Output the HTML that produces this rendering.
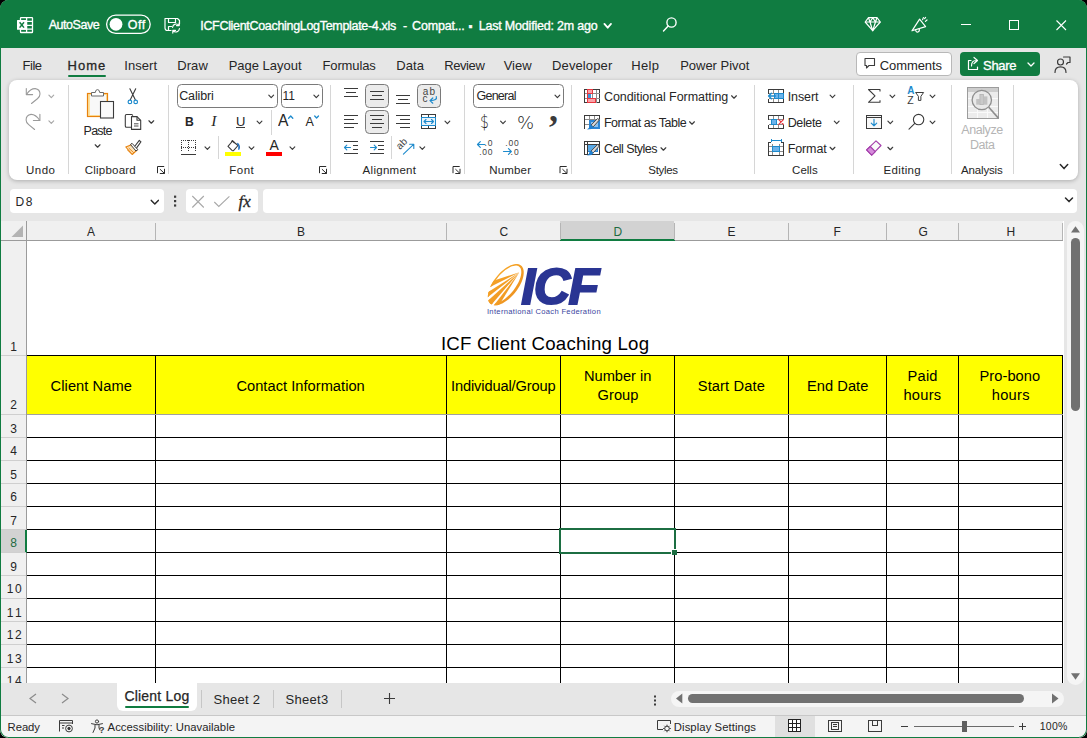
<!DOCTYPE html>
<html lang="en"><head><meta charset="utf-8"><title>ICFClientCoachingLogTemplate-4.xls - Excel</title>
<style>
html,body{margin:0;padding:0;background:#000;}
body{width:1087px;height:738px;overflow:hidden;position:relative;font-family:'Liberation Sans',sans-serif;}
#win{position:absolute;left:0;top:0;width:1087px;height:738px;background:#e6e6e6;border-radius:8.5px;overflow:hidden;}
.a{position:absolute;}
.t{position:absolute;white-space:pre;line-height:normal;font-family:'Liberation Sans',sans-serif;}
svg{position:absolute;left:0;top:0;}
</style></head><body>
<div id="win">
<div class="a" style="left:0px;top:0px;width:1087px;height:48px;background:#107c41;"></div>
<div class="a" style="left:9px;top:80px;width:1069px;height:100px;background:#fff;border-radius:8px;box-shadow:0 1px 4px rgba(0,0,0,.25);"></div>
<div class="a" style="left:856px;top:52px;width:96px;height:24px;background:#fff;border-radius:4px;box-sizing:border-box;border:1px solid #b8b8b8;"></div>
<div class="a" style="left:960px;top:52px;width:80px;height:24px;background:#107c41;border-radius:4px;"></div>
<div class="a" style="left:68px;top:75px;width:38px;height:2px;background:#107c41;border-radius:1px;"></div>
<div class="a" style="left:10px;top:189px;width:154px;height:24px;background:#fff;border-radius:4px;"></div>
<div class="a" style="left:186px;top:189px;width:72px;height:24px;background:#fff;border-radius:4px;"></div>
<div class="a" style="left:263px;top:189px;width:814px;height:24px;background:#fff;border-radius:4px;"></div>
<div class="a" style="left:1px;top:221px;width:1062px;height:462px;background:#fff;"></div>
<div class="a" style="left:1px;top:221px;width:1062px;height:19px;background:#f0f0f0;"></div>
<div class="a" style="left:1px;top:221px;width:25px;height:462px;background:#f0f0f0;"></div>
<div class="a" style="left:560px;top:221px;width:114px;height:19px;background:#d2d2d2;"></div>
<div class="a" style="left:1px;top:530px;width:25px;height:22px;background:#d2d2d2;"></div>
<div class="a" style="left:1px;top:240px;width:1062px;height:1px;background:#9b9b9b;"></div>
<div class="a" style="left:26px;top:221px;width:1px;height:462px;background:#9b9b9b;"></div>
<div class="a" style="left:560px;top:239px;width:115px;height:2px;background:#107c41;"></div>
<div class="a" style="left:25px;top:530px;width:2px;height:23px;background:#107c41;"></div>
<div class="a" style="left:155px;top:223px;width:1px;height:17px;background:#b5b5b5;"></div>
<div class="a" style="left:446px;top:223px;width:1px;height:17px;background:#b5b5b5;"></div>
<div class="a" style="left:560px;top:223px;width:1px;height:17px;background:#b5b5b5;"></div>
<div class="a" style="left:674px;top:223px;width:1px;height:17px;background:#b5b5b5;"></div>
<div class="a" style="left:788px;top:223px;width:1px;height:17px;background:#b5b5b5;"></div>
<div class="a" style="left:886px;top:223px;width:1px;height:17px;background:#b5b5b5;"></div>
<div class="a" style="left:958px;top:223px;width:1px;height:17px;background:#b5b5b5;"></div>
<div class="a" style="left:1062px;top:223px;width:1px;height:17px;background:#b5b5b5;"></div>
<div class="a" style="left:1px;top:355px;width:25px;height:1px;background:#cfcfcf;"></div>
<div class="a" style="left:1px;top:414px;width:25px;height:1px;background:#cfcfcf;"></div>
<div class="a" style="left:1px;top:437px;width:25px;height:1px;background:#cfcfcf;"></div>
<div class="a" style="left:1px;top:460px;width:25px;height:1px;background:#cfcfcf;"></div>
<div class="a" style="left:1px;top:483px;width:25px;height:1px;background:#cfcfcf;"></div>
<div class="a" style="left:1px;top:506px;width:25px;height:1px;background:#cfcfcf;"></div>
<div class="a" style="left:1px;top:529px;width:25px;height:1px;background:#cfcfcf;"></div>
<div class="a" style="left:1px;top:552px;width:25px;height:1px;background:#cfcfcf;"></div>
<div class="a" style="left:1px;top:575px;width:25px;height:1px;background:#cfcfcf;"></div>
<div class="a" style="left:1px;top:598px;width:25px;height:1px;background:#cfcfcf;"></div>
<div class="a" style="left:1px;top:621px;width:25px;height:1px;background:#cfcfcf;"></div>
<div class="a" style="left:1px;top:644px;width:25px;height:1px;background:#cfcfcf;"></div>
<div class="a" style="left:1px;top:667px;width:25px;height:1px;background:#cfcfcf;"></div>
<div class="a" style="left:27px;top:356px;width:1035px;height:58px;background:#ffff00;"></div>
<div class="a" style="left:155px;top:355px;width:1px;height:328px;background:#000;"></div>
<div class="a" style="left:446px;top:355px;width:1px;height:328px;background:#000;"></div>
<div class="a" style="left:560px;top:355px;width:1px;height:328px;background:#000;"></div>
<div class="a" style="left:674px;top:355px;width:1px;height:328px;background:#000;"></div>
<div class="a" style="left:788px;top:355px;width:1px;height:328px;background:#000;"></div>
<div class="a" style="left:886px;top:355px;width:1px;height:328px;background:#000;"></div>
<div class="a" style="left:958px;top:355px;width:1px;height:328px;background:#000;"></div>
<div class="a" style="left:1062px;top:355px;width:1px;height:328px;background:#000;"></div>
<div class="a" style="left:27px;top:355px;width:1036px;height:1px;background:#000;"></div>
<div class="a" style="left:27px;top:414px;width:1036px;height:1px;background:#a0a0a0;"></div>
<div class="a" style="left:27px;top:437px;width:1036px;height:1px;background:#000;"></div>
<div class="a" style="left:27px;top:460px;width:1036px;height:1px;background:#000;"></div>
<div class="a" style="left:27px;top:483px;width:1036px;height:1px;background:#000;"></div>
<div class="a" style="left:27px;top:506px;width:1036px;height:1px;background:#000;"></div>
<div class="a" style="left:27px;top:529px;width:1036px;height:1px;background:#000;"></div>
<div class="a" style="left:27px;top:552px;width:1036px;height:1px;background:#000;"></div>
<div class="a" style="left:27px;top:575px;width:1036px;height:1px;background:#000;"></div>
<div class="a" style="left:27px;top:598px;width:1036px;height:1px;background:#000;"></div>
<div class="a" style="left:27px;top:621px;width:1036px;height:1px;background:#000;"></div>
<div class="a" style="left:27px;top:644px;width:1036px;height:1px;background:#000;"></div>
<div class="a" style="left:27px;top:667px;width:1036px;height:1px;background:#000;"></div>
<div class="a" style="left:559px;top:528px;width:117px;height:26px;background:transparent;box-sizing:border-box;border:2px solid #1c6e42;"></div>
<div class="a" style="left:671px;top:549px;width:6px;height:6px;background:#fff;"></div>
<div class="a" style="left:672px;top:550px;width:5px;height:5px;background:#1c6e42;"></div>
<div class="a" style="left:1063px;top:221px;width:1px;height:462px;background:#fff;"></div>
<div class="a" style="left:1px;top:683px;width:116px;height:32px;background:#e6e6e6;border-top-right-radius:5px;"></div>
<div class="a" style="left:197px;top:683px;width:889px;height:32px;background:#e6e6e6;border-top-left-radius:5px;"></div>
<div class="a" style="left:117px;top:711px;width:80px;height:4px;background:#e6e6e6;"></div>
<div class="a" style="left:117px;top:683px;width:80px;height:28px;background:#fff;border-radius:0 0 6px 6px;"></div>
<div class="a" style="left:125px;top:706px;width:64px;height:2px;background:#107c41;border-radius:1px;"></div>
<div class="a" style="left:201px;top:690px;width:1px;height:18px;background:#c6c6c6;"></div>
<div class="a" style="left:273px;top:690px;width:1px;height:18px;background:#c6c6c6;"></div>
<div class="a" style="left:341px;top:690px;width:1px;height:18px;background:#c6c6c6;"></div>
<div class="a" style="left:1067px;top:221px;width:17px;height:464px;background:#f5f5f5;border-radius:9px;"></div>
<div class="a" style="left:1071px;top:238px;width:9px;height:173px;background:#717171;border-radius:5px;"></div>
<div class="a" style="left:671px;top:691px;width:393px;height:16px;background:#f5f5f5;border-radius:8px;"></div>
<div class="a" style="left:688px;top:694px;width:336px;height:9px;background:#717171;border-radius:5px;"></div>
<div class="a" style="left:1px;top:716px;width:1085px;height:21px;background:#f4f4f4;"></div>
<div class="a" style="left:1px;top:715px;width:1085px;height:1px;background:#c8c8c8;"></div>
<div class="a" style="left:775px;top:716px;width:40px;height:21px;background:#e0e0e0;"></div>
<div class="a" style="left:914px;top:726px;width:100px;height:1px;background:#6a6a6a;"></div>
<div class="a" style="left:962px;top:721px;width:5px;height:11px;background:#5f5f5f;"></div>
<div class="a" style="left:0px;top:0px;width:1087px;height:738px;background:transparent;border-radius:8.5px;box-shadow:inset 0 0 0 1px #107c41;"></div>
<span class="t" style="left:396px;top:138px;font-size:10px;color:#444;transform:rotate(-45deg);transform-origin:50% 50%;">ab</span>
<svg width="1087" height="738" viewBox="0 0 1087 738" fill="none">
<g stroke="#fff" stroke-width="1.3"><rect x="20.5" y="17.6" width="12" height="14.9" rx="0.6"/><path d="M26.6 17.6V32.5 M20.5 21.4H32.5 M20.5 25.3H32.5 M20.5 29.2H32.5"/></g>
<rect x="17" y="20" width="9.7" height="9.8" rx="0.5" fill="#fff"/>
<path d="M19.6 22.2 L24 27.6 M24 22.2 L19.6 27.6" stroke="#107c41" stroke-width="1.5"/>
<rect x="106.6" y="15.1" width="43.6" height="18.3" rx="9.15" stroke="#fff" stroke-width="1.3"/>
<circle cx="116" cy="24.3" r="6.4" fill="#fff"/>
<g stroke="#fff" stroke-width="1.2" stroke-linejoin="round" stroke-linecap="round"><path d="M171 30.5 H167.5 Q165 30.5 165 28 V18.5 H177.5 L179.5 20.5 V24"/><path d="M168.5 18.5 V22.5 H175.5 V18.5"/><path d="M168.5 30.5 V26.5 H171.5"/><path d="M172.6 27.3 A3.6 3.6 0 0 1 179 25.4 M179.2 22.9 V25.6 H176.5"/><path d="M179.4 28.7 A3.6 3.6 0 0 1 173 30.6 M172.8 33.1 V30.4 H175.5"/></g>
<path d="M604.4000000000001 23.900000000000002 L607.7 27.7 L611.0 23.900000000000002" stroke="#fff" stroke-width="1.8" stroke-linecap="round" stroke-linejoin="round"/>
<g stroke="#fff" stroke-width="1.4" stroke-linecap="round"><circle cx="671.5" cy="22.5" r="4.6"/><path d="M668.2 26 L663.5 31"/></g>
<g stroke="#fff" stroke-width="1.2" stroke-linejoin="round"><path d="M868.5 17.7 H877 L880.3 22 L872.7 30.7 L865.2 22 Z"/><path d="M865.2 22 H880.3 M870 22 L872.7 30.7 L875.5 22 M868.5 17.7 L870 22 L872.7 17.7 L875.5 22 L877 17.7"/></g>
<g stroke="#fff" stroke-width="1.2" stroke-linejoin="round" stroke-linecap="round"><path d="M912 30.8 L919.6 19.2 L925.6 26.6 Z"/><path d="M915.6 29.8 Q915.8 32.4 918 32 Q919.8 31.4 919.2 28.8"/><path d="M922.6 19.6 L923.4 17.6 M925.4 21.4 L927 20 M924.6 18.6 L925.6 17.4"/></g>
<rect x="961" y="24" width="10" height="1" fill="#fff" shape-rendering="crispEdges"/>
<rect x="1009.5" y="20.5" width="9" height="9" stroke="#fff" stroke-width="1"/>
<path d="M1056.5 20.5 L1066 30 M1066 20.5 L1056.5 30" stroke="#fff" stroke-width="1.1"/>
<path d="M865 58.5 H874.5 V65.5 H869 L866.5 68 V65.5 H865 Z" stroke="#3b3b3b" stroke-width="1.1" stroke-linejoin="round"/>
<g stroke="#fff" stroke-width="1.2" stroke-linejoin="round" stroke-linecap="round"><path d="M971 60.5 H968.5 V69.5 H977.5 V67"/><path d="M971.5 66 Q971.5 60.5 976 60.5 M974 57.5 L977.5 60.5 L974 63.5"/></g>
<path d="M1028.0 63.0 L1031 66.0 L1034.0 63.0" stroke="#fff" stroke-width="1.3" stroke-linecap="round" stroke-linejoin="round"/>
<g stroke="#3b3b3b" stroke-width="1.2" stroke-linejoin="round" stroke-linecap="round"><circle cx="1060.5" cy="62" r="3"/><path d="M1055 72.5 Q1055 66.8 1060.5 66.8 Q1066 66.8 1066 72.5"/><path d="M1063.5 57 H1070 V62.5 H1068 L1066.5 64"/></g>
<rect x="68" y="85" width="1" height="89" fill="#d6d6d6" shape-rendering="crispEdges"/>
<rect x="168" y="85" width="1" height="89" fill="#d6d6d6" shape-rendering="crispEdges"/>
<rect x="330" y="85" width="1" height="89" fill="#d6d6d6" shape-rendering="crispEdges"/>
<rect x="464" y="85" width="1" height="89" fill="#d6d6d6" shape-rendering="crispEdges"/>
<rect x="571" y="85" width="1" height="89" fill="#d6d6d6" shape-rendering="crispEdges"/>
<rect x="754" y="85" width="1" height="89" fill="#d6d6d6" shape-rendering="crispEdges"/>
<rect x="853" y="85" width="1" height="89" fill="#d6d6d6" shape-rendering="crispEdges"/>
<rect x="951" y="85" width="1" height="89" fill="#d6d6d6" shape-rendering="crispEdges"/>
<rect x="1013" y="85" width="1" height="89" fill="#d6d6d6" shape-rendering="crispEdges"/>
<rect x="271" y="110" width="1" height="25" fill="#d6d6d6" shape-rendering="crispEdges"/>
<rect x="218" y="136" width="1" height="23" fill="#d6d6d6" shape-rendering="crispEdges"/>
<rect x="391" y="136" width="1" height="23" fill="#d6d6d6" shape-rendering="crispEdges"/>
<g stroke="#9a9a9a" stroke-width="1.1" stroke-linejoin="round" stroke-linecap="round"><path d="M26.3 88.5 V94.6 H32.6"/><path d="M26.6 94.3 Q30.5 88.5 35.2 88.6 Q40 89.3 40 94 Q40 96.6 37.4 98.7 L31.5 103.5"/></g>
<g stroke="#9a9a9a" stroke-width="1.1" stroke-linejoin="round" stroke-linecap="round"><path d="M39.9 114.3 V120.5 H33.4"/><path d="M39.6 120.2 Q35.7 114.3 31 114.4 Q26.1 115.1 26.1 119.9 Q26.1 122.5 28.7 124.6 L34.6 129.5"/></g>
<path d="M48.9 95.05 L51.3 97.55 L53.699999999999996 95.05" stroke="#a8a8a8" stroke-width="1.15" stroke-linecap="round" stroke-linejoin="round"/>
<path d="M48.9 120.85 L51.3 123.35 L53.699999999999996 120.85" stroke="#a8a8a8" stroke-width="1.15" stroke-linecap="round" stroke-linejoin="round"/>
<rect x="87.5" y="93.5" width="20" height="23" fill="#fde2a0" stroke="#e8820e" stroke-width="1.2"/>
<rect x="90" y="95" width="16" height="20" fill="#f8f8f8"/>
<path d="M91.5 96 V92.5 H95.3 Q95.5 89.6 97.5 89.6 Q99.5 89.6 99.7 92.5 H103.5 V96 Z" fill="#fff" stroke="#6a6a6a" stroke-width="1" stroke-linejoin="round"/>
<rect x="100.5" y="101.5" width="13" height="16.5" fill="#fafafa" stroke="#3b3b3b" stroke-width="1.1"/>
<path d="M95.19999999999999 144.75 L97.6 147.25 L100.0 144.75" stroke="#3b3b3b" stroke-width="1.15" stroke-linecap="round" stroke-linejoin="round"/>
<g stroke-linecap="round"><path d="M129.9 88.8 L135.3 99.8 M135.7 88.8 L130.3 99.8" stroke="#3b3b3b" stroke-width="1.1"/><circle cx="129.9" cy="101.9" r="1.8" stroke="#1e8bcd" stroke-width="1.2"/><circle cx="135.7" cy="101.9" r="1.8" stroke="#1e8bcd" stroke-width="1.2"/></g>
<g stroke="#3b3b3b" stroke-width="1.1" stroke-linejoin="round"><path d="M131 127.3 H126.5 Q125.3 127.3 125.3 126 V115.7 Q125.3 114.5 126.5 114.5 H131.5 Q132.7 114.5 132.7 115.7"/><path d="M131.5 116.6 H137 L140.7 120.3 V129.4 H131.5 Z" fill="#fff"/><path d="M137 116.6 V120.3 H140.7"/><path d="M134 123.8 H138.5 M134 126 H138.5" stroke-width="0.9"/></g>
<path d="M148.9 120.75 L151.3 123.25 L153.70000000000002 120.75" stroke="#3b3b3b" stroke-width="1.15" stroke-linecap="round" stroke-linejoin="round"/>
<g stroke-linejoin="round" stroke-linecap="round"><path d="M125.8 147 L132 144.6 L137 150.2 L132.2 154.5 Z" fill="#fbe0b5" stroke="#e8820e" stroke-width="1.1"/><path d="M129 148.3 L133.6 152.6 M127.4 150 L131.2 153.6" stroke="#e8820e" stroke-width="0.9"/><path d="M132.3 143.6 L137.8 149.6 L136 151 L130.7 144.8 Z" fill="#fff" stroke="#3b3b3b" stroke-width="1"/><path d="M135 146 L139.3 140.4 L141 141.8 L136.8 147.6" stroke="#3b3b3b" stroke-width="1.1" fill="#fff"/></g>
<path d="M157.5 172.8 V166.5 H163.8" stroke="#2b2b2b" stroke-width="1" stroke-linecap="round" stroke-linejoin="round"/>
<path d="M160.2 169.4 L164.3 173.3 M164.5 169.2 V173.5 H160.2" stroke="#2b2b2b" stroke-width="1" stroke-linecap="round" stroke-linejoin="round"/>
<rect x="177.5" y="84.5" width="100" height="23" rx="4" stroke="#7a7a7a" stroke-width="1" fill="#fff"/>
<rect x="281.5" y="84.5" width="41" height="23" rx="4" stroke="#7a7a7a" stroke-width="1" fill="#fff"/>
<path d="M268.8 95.05 L271.2 97.55 L273.59999999999997 95.05" stroke="#3b3b3b" stroke-width="1.15" stroke-linecap="round" stroke-linejoin="round"/>
<path d="M313.90000000000003 95.05 L316.3 97.55 L318.7 95.05" stroke="#3b3b3b" stroke-width="1.15" stroke-linecap="round" stroke-linejoin="round"/>
<rect x="236" y="127" width="9" height="1" fill="#3b3b3b" shape-rendering="crispEdges"/>
<path d="M257.1 121.05 L259.5 123.55 L261.9 121.05" stroke="#3b3b3b" stroke-width="1.15" stroke-linecap="round" stroke-linejoin="round"/>
<path d="M288.6 118.2 L290.7 116 L292.8 118.2" stroke="#1e8bcd" stroke-width="1.3" stroke-linecap="round" stroke-linejoin="round"/>
<path d="M314.7 116 L316.6 118 L318.5 116" stroke="#1e8bcd" stroke-width="1.3" stroke-linecap="round" stroke-linejoin="round"/>
<g stroke="#3b3b3b" stroke-width="1" stroke-dasharray="1 1" shape-rendering="crispEdges"><path d="M181 140.5 H196 M181.5 140 V152 M195.5 140 V152 M188.5 140 V152 M181 147.5 H196"/></g>
<rect x="181" y="154" width="15" height="1.3" fill="#3b3b3b" shape-rendering="crispEdges"/>
<path d="M205.0 146.95 L207.4 149.45 L209.8 146.95" stroke="#3b3b3b" stroke-width="1.15" stroke-linecap="round" stroke-linejoin="round"/>
<g stroke-linejoin="round" stroke-linecap="round"><path d="M228 146.3 L232.5 141 L238 145.5 L233.5 150.7 Q232.7 151 232 150.4 Z" stroke="#3b3b3b" stroke-width="1.1" fill="#fff"/><path d="M231.7 142 Q231.2 140 233 140.6 Q233.8 141 234 142.8" stroke="#3b3b3b" stroke-width="1"/><path d="M237.8 143.6 Q240.2 146.5 238.8 149.2" stroke="#1e6fc0" stroke-width="1.4"/></g>
<rect x="225" y="152" width="16" height="4" fill="#ffff00"/>
<path d="M249.1 146.95 L251.5 149.45 L253.9 146.95" stroke="#3b3b3b" stroke-width="1.15" stroke-linecap="round" stroke-linejoin="round"/>
<rect x="266" y="152" width="16" height="4" fill="#ff0000"/>
<path d="M290.0 146.95 L292.4 149.45 L294.79999999999995 146.95" stroke="#3b3b3b" stroke-width="1.15" stroke-linecap="round" stroke-linejoin="round"/>
<path d="M319.5 172.8 V166.5 H325.8" stroke="#2b2b2b" stroke-width="1" stroke-linecap="round" stroke-linejoin="round"/>
<path d="M322.2 169.4 L326.3 173.3 M326.5 169.2 V173.5 H322.2" stroke="#2b2b2b" stroke-width="1" stroke-linecap="round" stroke-linejoin="round"/>
<rect x="365.5" y="84.5" width="23" height="23" rx="4" fill="#ebebeb" stroke="#7a7a7a"/>
<rect x="417.5" y="84.5" width="23" height="23" rx="4" fill="#ebebeb" stroke="#7a7a7a"/>
<rect x="365.5" y="110.5" width="23" height="23" rx="4" fill="#ebebeb" stroke="#7a7a7a"/>
<rect x="344" y="88" width="14" height="1" fill="#3b3b3b" shape-rendering="crispEdges"/>
<rect x="346" y="92" width="10" height="1" fill="#3b3b3b" shape-rendering="crispEdges"/>
<rect x="344" y="96" width="14" height="1" fill="#3b3b3b" shape-rendering="crispEdges"/>
<rect x="370" y="91" width="14" height="1" fill="#3b3b3b" shape-rendering="crispEdges"/>
<rect x="372" y="95" width="10" height="1" fill="#3b3b3b" shape-rendering="crispEdges"/>
<rect x="370" y="99" width="14" height="1" fill="#3b3b3b" shape-rendering="crispEdges"/>
<rect x="396" y="95" width="14" height="1" fill="#3b3b3b" shape-rendering="crispEdges"/>
<rect x="398" y="99" width="10" height="1" fill="#3b3b3b" shape-rendering="crispEdges"/>
<rect x="396" y="103" width="14" height="1" fill="#3b3b3b" shape-rendering="crispEdges"/>
<path d="M436.3 96.6 Q437.6 100.6 430.2 100.6 M432.8 98 L430 100.6 L432.8 103.2" stroke="#1e8bcd" stroke-width="1.2" stroke-linecap="round" stroke-linejoin="round"/>
<rect x="344" y="115" width="14" height="1" fill="#3b3b3b" shape-rendering="crispEdges"/>
<rect x="344" y="119" width="10" height="1" fill="#3b3b3b" shape-rendering="crispEdges"/>
<rect x="344" y="123" width="14" height="1" fill="#3b3b3b" shape-rendering="crispEdges"/>
<rect x="344" y="127" width="10" height="1" fill="#3b3b3b" shape-rendering="crispEdges"/>
<rect x="370" y="115" width="14" height="1" fill="#3b3b3b" shape-rendering="crispEdges"/>
<rect x="372" y="119" width="10" height="1" fill="#3b3b3b" shape-rendering="crispEdges"/>
<rect x="370" y="123" width="14" height="1" fill="#3b3b3b" shape-rendering="crispEdges"/>
<rect x="372" y="127" width="10" height="1" fill="#3b3b3b" shape-rendering="crispEdges"/>
<rect x="396" y="115" width="14" height="1" fill="#3b3b3b" shape-rendering="crispEdges"/>
<rect x="400" y="119" width="10" height="1" fill="#3b3b3b" shape-rendering="crispEdges"/>
<rect x="396" y="123" width="14" height="1" fill="#3b3b3b" shape-rendering="crispEdges"/>
<rect x="400" y="127" width="10" height="1" fill="#3b3b3b" shape-rendering="crispEdges"/>
<g shape-rendering="crispEdges" stroke="#3b3b3b"><path d="M421.5 117.5 V114.5 H435.5 V117.5 M428.5 114.5 V117.5 M421.5 125.5 V128.5 H435.5 V125.5 M428.5 125.5 V128.5"/></g>
<rect x="421.5" y="117.5" width="14" height="8" fill="#e9f3fb" stroke="#1e8bcd" shape-rendering="crispEdges"/>
<path d="M424 121.5 H433.5 M426 119.5 L424 121.5 L426 123.5 M431.5 119.5 L433.5 121.5 L431.5 123.5" stroke="#1e8bcd" stroke-width="1.1" stroke-linecap="round" stroke-linejoin="round"/>
<path d="M445.0 121.05 L447.4 123.55 L449.79999999999995 121.05" stroke="#3b3b3b" stroke-width="1.15" stroke-linecap="round" stroke-linejoin="round"/>
<rect x="344" y="141" width="14" height="1" fill="#3b3b3b" shape-rendering="crispEdges"/>
<rect x="353" y="145" width="5" height="1" fill="#3b3b3b" shape-rendering="crispEdges"/>
<rect x="353" y="149" width="5" height="1" fill="#3b3b3b" shape-rendering="crispEdges"/>
<rect x="344" y="153" width="14" height="1" fill="#3b3b3b" shape-rendering="crispEdges"/>
<path d="M344.5 147.5 H350.5 M346.8 145.2 L344.5 147.5 L346.8 149.8" stroke="#1e8bcd" stroke-width="1.1" stroke-linecap="round" stroke-linejoin="round"/>
<rect x="370" y="141" width="14" height="1" fill="#3b3b3b" shape-rendering="crispEdges"/>
<rect x="378" y="145" width="6" height="1" fill="#3b3b3b" shape-rendering="crispEdges"/>
<rect x="378" y="149" width="6" height="1" fill="#3b3b3b" shape-rendering="crispEdges"/>
<rect x="370" y="153" width="14" height="1" fill="#3b3b3b" shape-rendering="crispEdges"/>
<path d="M370.5 147.5 H376.5 M374.2 145.2 L376.5 147.5 L374.2 149.8" stroke="#1e8bcd" stroke-width="1.1" stroke-linecap="round" stroke-linejoin="round"/>
<path d="M403.4 154.2 L413.6 144.4 M409.6 144.2 H413.8 V148.4" stroke="#1e8bcd" stroke-width="1.1" stroke-linecap="round" stroke-linejoin="round"/>
<path d="M419.90000000000003 146.95 L422.3 149.45 L424.7 146.95" stroke="#3b3b3b" stroke-width="1.15" stroke-linecap="round" stroke-linejoin="round"/>
<path d="M453.0 172.8 V166.5 H459.3" stroke="#2b2b2b" stroke-width="1" stroke-linecap="round" stroke-linejoin="round"/>
<path d="M455.7 169.4 L459.8 173.3 M460.0 169.2 V173.5 H455.7" stroke="#2b2b2b" stroke-width="1" stroke-linecap="round" stroke-linejoin="round"/>
<rect x="473.5" y="84.5" width="90" height="23" rx="4" stroke="#7a7a7a" stroke-width="1" fill="#fff"/>
<path d="M555.0 95.05 L557.4 97.55 L559.8 95.05" stroke="#3b3b3b" stroke-width="1.15" stroke-linecap="round" stroke-linejoin="round"/>
<path d="M500.6 121.05 L503 123.55 L505.4 121.05" stroke="#3b3b3b" stroke-width="1.15" stroke-linecap="round" stroke-linejoin="round"/>
<path d="M477.5 144.5 H485 M480.3 141.7 L477.5 144.5 L480.3 147.3" stroke="#1e8bcd" stroke-width="1.2" stroke-linecap="round" stroke-linejoin="round"/>
<path d="M503.5 151.5 H511.3 M508.5 148.7 L511.3 151.5 L508.5 154.3" stroke="#1e8bcd" stroke-width="1.2" stroke-linecap="round" stroke-linejoin="round"/>
<path d="M560.0 172.8 V166.5 H566.3" stroke="#2b2b2b" stroke-width="1" stroke-linecap="round" stroke-linejoin="round"/>
<path d="M562.7 169.4 L566.8 173.3 M567.0 169.2 V173.5 H562.7" stroke="#2b2b2b" stroke-width="1" stroke-linecap="round" stroke-linejoin="round"/>
<g shape-rendering="crispEdges"><rect x="584.5" y="89.5" width="15" height="13" fill="#fff" stroke="#3b3b3b"/><path d="M584.5 93.5 H599.5 M584.5 98.5 H599.5 M587.5 89.5 V102.5 M592.5 89.5 V102.5 M596.5 89.5 V102.5" stroke="#8c8c8c"/><rect x="587.5" y="89.5" width="5" height="4" fill="#f9a3a9" stroke="#e8373f"/><rect x="588" y="94" width="3" height="4" fill="#3f97dd"/><path d="M587.5 93.5 V98.5" stroke="#e8373f"/><rect x="587.5" y="98.5" width="8" height="4" fill="#f9a3a9" stroke="#e8373f"/></g>
<path d="M731.6 95.75 L734 98.25 L736.4 95.75" stroke="#3b3b3b" stroke-width="1.15" stroke-linecap="round" stroke-linejoin="round"/>
<g shape-rendering="crispEdges"><path d="M584.5 119.5 H599.5 M584.5 124.5 H589 M589.5 115.5 V119.5 M594.5 115.5 V119.5" stroke="#8c8c8c"/><path d="M584.5 128.5 V115.5 H599.5 V119" stroke="#3b3b3b" fill="none"/><rect x="589" y="120" width="11" height="9" fill="#2b86d6"/><rect x="591" y="122" width="7" height="5" fill="#8cc1ee"/></g>
<path d="M599.4 119.9 L593.2 126.9 L591 125.1 L597.6 118.5 Z" fill="#dcdcdc" stroke="#3b3b3b" stroke-width="0.9" stroke-linejoin="round"/>
<path d="M591 124.7 L593.4 127.0 Q592.6 129.5 587 129.5 Q589.4 128.1 589.4 126.3 Q589.8 124.9 591 124.7 Z" fill="#1e7fd0"/>
<path d="M689.6 121.75 L692 124.25 L694.4 121.75" stroke="#3b3b3b" stroke-width="1.15" stroke-linecap="round" stroke-linejoin="round"/>
<g shape-rendering="crispEdges"><rect x="584.5" y="141.5" width="15" height="13" fill="#fff" stroke="#3b3b3b"/><path d="M584.5 144.5 H599.5 M587.5 141.5 V154.5" stroke="#3b3b3b"/><rect x="588" y="145" width="9" height="6" fill="#5aa9e6"/><path d="M587.5 151.5 H597.5 V144.5" stroke="#2b86d6" fill="none"/></g>
<path d="M599.4 145.9 L593.2 152.9 L591 151.1 L597.6 144.5 Z" fill="#dcdcdc" stroke="#3b3b3b" stroke-width="0.9" stroke-linejoin="round"/>
<path d="M591 150.7 L593.4 153.0 Q592.6 155.5 587 155.5 Q589.4 154.1 589.4 152.3 Q589.8 150.9 591 150.7 Z" fill="#1e7fd0"/>
<path d="M661.0 147.75 L663.4 150.25 L665.8 147.75" stroke="#3b3b3b" stroke-width="1.15" stroke-linecap="round" stroke-linejoin="round"/>
<g shape-rendering="crispEdges"><path d="M773.5 89.5 V93.5 M778.5 89.5 V93.5 M773.5 98.5 V102.5 M778.5 98.5 V102.5 M768.5 93.5 H774 M768.5 98.5 H774" stroke="#8c8c8c"/><path d="M768.5 93.5 V89.5 H783.5 V93.5 M768.5 98.5 V102.5 H783.5 V98.5" stroke="#3b3b3b"/></g>
<rect x="774.5" y="93.5" width="9" height="5" fill="#6db3ea" stroke="#1e8bcd" shape-rendering="crispEdges"/><path d="M778.5 93.5 V98.5" stroke="#1e8bcd" shape-rendering="crispEdges"/>
<path d="M768.7 96 H775.4 M771.4 93.2 L768.6 96 L771.4 98.8" stroke="#1e8bcd" stroke-width="1.4" stroke-linecap="round" stroke-linejoin="round"/>
<path d="M830.1 95.05 L832.5 97.55 L834.9 95.05" stroke="#3b3b3b" stroke-width="1.15" stroke-linecap="round" stroke-linejoin="round"/>
<g shape-rendering="crispEdges"><path d="M773.5 115.5 V119.5 M778.5 115.5 V119.5 M773.5 124.5 V128.5 M778.5 124.5 V128.5 M768.5 119.5 H771 M768.5 124.5 H771 M777 119.5 H783.5 M777 124.5 H783.5" stroke="#8c8c8c"/><path d="M768.5 119.5 V115.5 H783.5 V119.5 M768.5 124.5 V128.5 H783.5 V124.5" stroke="#3b3b3b"/></g>
<rect x="771.5" y="119.5" width="5" height="5" fill="#6db3ea" stroke="#1e8bcd" shape-rendering="crispEdges"/>
<path d="M778.8 119.7 L783.4 124.3 M783.4 119.7 L778.8 124.3" stroke="#e8373f" stroke-width="1.2" stroke-linecap="round"/>
<path d="M834.3000000000001 121.05 L836.7 123.55 L839.1 121.05" stroke="#3b3b3b" stroke-width="1.15" stroke-linecap="round" stroke-linejoin="round"/>
<path d="M771.5 139 V142 M781.5 139 V142 M771.5 140.5 H781.5" stroke="#1e8bcd" stroke-width="1" shape-rendering="crispEdges"/>
<g shape-rendering="crispEdges"><path d="M768.5 146.5 H783.5 M768.5 151.5 H783.5 M772.5 143.5 V155.5 M779.5 143.5 V155.5" stroke="#8c8c8c"/><path d="M771 142.5 H768.5 V155.5 H783.5 V142.5 H781" stroke="#3b3b3b"/></g>
<rect x="772.5" y="146.5" width="7" height="5" fill="#6db3ea" stroke="#1e8bcd" shape-rendering="crispEdges"/>
<path d="M830.1 147.25 L832.5 149.75 L834.9 147.25" stroke="#3b3b3b" stroke-width="1.15" stroke-linecap="round" stroke-linejoin="round"/>
<path d="M880 91.5 V89.5 H868.5 L875 95.9 L868.5 102.3 H880 V100.3" stroke="#3b3b3b" stroke-width="1.1" stroke-linejoin="round"/>
<path d="M890.0 95.05 L892.4 97.55 L894.8 95.05" stroke="#3b3b3b" stroke-width="1.15" stroke-linecap="round" stroke-linejoin="round"/>
<path d="M915.6 92.5 H923.6 L920.9 96.3 V100.4 H918.4 V96.3 Z" stroke="#3b3b3b" stroke-width="1" stroke-linejoin="round"/>
<path d="M930.1 95.05 L932.5 97.55 L934.9 95.05" stroke="#3b3b3b" stroke-width="1.15" stroke-linecap="round" stroke-linejoin="round"/>
<g shape-rendering="crispEdges"><rect x="866.5" y="115.5" width="15" height="13" stroke="#3b3b3b" fill="#f8f8f8"/><path d="M866.5 117.5 H881.5" stroke="#3b3b3b"/></g>
<path d="M874 119.3 V125.8 M871.3 123.2 L874 125.9 L876.7 123.2" stroke="#1e8bcd" stroke-width="1.2" stroke-linecap="round" stroke-linejoin="round"/>
<path d="M887.9 121.05 L890.3 123.55 L892.6999999999999 121.05" stroke="#3b3b3b" stroke-width="1.15" stroke-linecap="round" stroke-linejoin="round"/>
<g stroke="#3b3b3b" stroke-width="1.1" stroke-linecap="round"><circle cx="918.6" cy="119.6" r="5.2"/><path d="M914.8 123.3 L909 129.2"/></g>
<path d="M930.1 121.05 L932.5 123.55 L934.9 121.05" stroke="#3b3b3b" stroke-width="1.15" stroke-linecap="round" stroke-linejoin="round"/>
<path d="M876 140.8 L881 145.5 L871.7 155.2 L866.6 149.8 Z" fill="#fafafa" stroke="#a33daa" stroke-width="1.1" stroke-linejoin="round"/>
<path d="M870.3 146.5 L875.3 151.6 L871.7 155.2 L866.6 149.8 Z" fill="#d58bdb" stroke="#a33daa" stroke-width="1.1" stroke-linejoin="round"/>
<path d="M887.9 147.25 L890.3 149.75 L892.6999999999999 147.25" stroke="#3b3b3b" stroke-width="1.15" stroke-linecap="round" stroke-linejoin="round"/>
<g shape-rendering="crispEdges"><rect x="967.5" y="87.5" width="31" height="31" fill="#ececec" stroke="#9c9c9c"/><rect x="968" y="88" width="30" height="4" fill="#cdcdcd"/><path d="M968 98.5 H998 M968 106.5 H998 M968 112.5 H998 M977.5 92 V118 M987.5 92 V118" stroke="#fafafa"/></g>
<circle cx="981.8" cy="100" r="9.7" fill="#e9e9e9" stroke="#8e8e8e" stroke-width="1.3"/><path d="M988.8 107.2 L998.6 118.4" stroke="#8e8e8e" stroke-width="1.6"/><rect x="976.2" y="99" width="3.4" height="5.7" fill="#c2c2c2"/><rect x="979.9" y="94.3" width="3.5" height="10.4" fill="#c9c9c9" stroke="#a8a8a8" stroke-width="0.6"/><rect x="983.7" y="96.4" width="3.7" height="8.3" fill="#c2c2c2"/>
<path d="M1060.3 164.6 L1064 168.6 L1067.7 164.6" stroke="#2b2b2b" stroke-width="1.5" stroke-linecap="round" stroke-linejoin="round"/>
<path d="M151.3 200.39999999999998 L154.8 204.0 L158.3 200.39999999999998" stroke="#2b2b2b" stroke-width="1.5" stroke-linecap="round" stroke-linejoin="round"/>
<rect x="174" y="195.6" width="2.2" height="2.2" fill="#3b3b3b"/>
<rect x="174" y="200" width="2.2" height="2.2" fill="#3b3b3b"/>
<rect x="174" y="204.4" width="2.2" height="2.2" fill="#3b3b3b"/>
<path d="M192.3 196 L203.8 207.5 M203.8 196 L192.3 207.5" stroke="#a8a8a8" stroke-width="1.1"/>
<path d="M214.3 202 L218.8 206.5 L229.4 196.4" stroke="#a8a8a8" stroke-width="1.1"/>
<path d="M1065.5 198.0 L1069 201.60000000000002 L1072.5 198.0" stroke="#2b2b2b" stroke-width="1.5" stroke-linecap="round" stroke-linejoin="round"/>
<path d="M23 225.5 V237 H11.5 Z" fill="#b3b3b3"/>
<path d="M1071 232.5 L1075.5 226.3 L1080 232.5 Z" fill="#717171"/>
<path d="M1071 673.3 L1075.5 679.8 L1080 673.3 Z" fill="#717171"/>
<path d="M682.3 693.5 L676 698.5 L682.3 703.5 Z" fill="#717171"/>
<path d="M1052 693.5 L1058.5 698.5 L1052 703.5 Z" fill="#717171"/>
<path d="M36 694 L30 698.5 L36 703" stroke="#8c8c8c" stroke-width="1.2"/>
<path d="M62 694 L68 698.5 L62 703" stroke="#8c8c8c" stroke-width="1.2"/>
<path d="M384 698.5 H395 M389.5 693 V704" stroke="#3b3b3b" stroke-width="1.1"/>
<rect x="654" y="695.5" width="2" height="2" fill="#3b3b3b"/>
<rect x="654" y="699.5" width="2" height="2" fill="#3b3b3b"/>
<rect x="654" y="703.5" width="2" height="2" fill="#3b3b3b"/>
<g stroke="#3b3b3b" stroke-width="1" shape-rendering="geometricPrecision"><path d="M59.5 731.5 V720.5 H72.5 V724"/><path d="M59.5 723 H72.5"/><path d="M62 725.5 H64.5 M62 728 H64"/><circle cx="69" cy="728.5" r="3.4"/><circle cx="69" cy="728.5" r="1.2" fill="#3b3b3b"/></g>
<g stroke="#3b3b3b" stroke-width="1" stroke-linecap="round" stroke-linejoin="round"><circle cx="97" cy="721.5" r="1.6"/><path d="M91.5 723.7 Q97 726 102.5 723.7 M95 725.2 V728 L93 732.5 M99 725.2 V728 L100 730"/></g>
<g stroke="#3b3b3b" stroke-width="1" stroke-linejoin="round"><path d="M663 729.5 H657.5 V720.5 H670.5 V724"/><circle cx="667" cy="728.5" r="2.3"/><path d="M667 724.7 V726 M667 731 V732.3 M663.2 728.5 H664.5 M669.5 728.5 H670.8 M664.3 725.8 L665.2 726.7 M668.8 730.3 L669.7 731.2 M664.3 731.2 L665.2 730.3 M668.8 726.7 L669.7 725.8"/></g>
<g shape-rendering="crispEdges" stroke="#222"><rect x="788.5" y="719.5" width="12" height="12" fill="#fff"/><path d="M792.5 719.5 V731.5 M796.5 719.5 V731.5 M788.5 723.5 H800.5 M788.5 727.5 H800.5"/></g>
<g shape-rendering="crispEdges" stroke="#3b3b3b"><rect x="828.5" y="720.5" width="13" height="11"/><rect x="831.5" y="722.5" width="7" height="7"/><path d="M833 724.5 H837 M833 726.5 H837"/></g>
<g shape-rendering="crispEdges" stroke="#3b3b3b"><rect x="868.5" y="720.5" width="13" height="11"/><path d="M872.5 720.5 V725.5 H877.5 V720.5"/></g>
<rect x="901" y="726" width="7" height="1" fill="#3b3b3b" shape-rendering="crispEdges"/>
<path d="M1019 726.5 H1026 M1022.5 723 V730" stroke="#3b3b3b" stroke-width="1" shape-rendering="crispEdges"/>
<defs><linearGradient id="og" x1="0" y1="0" x2="1" y2="1"><stop offset="0" stop-color="#fbb02e"/><stop offset="1" stop-color="#ea8b1c"/></linearGradient></defs>
<clipPath id="oc"><path d="M520.98 265.47 L521.90 266.37 L522.64 267.47 L523.20 268.75 L523.57 270.21 L523.74 271.83 L523.71 273.59 L523.49 275.47 L523.08 277.45 L522.47 279.52 L521.68 281.63 L520.72 283.79 L519.60 285.95 L518.32 288.10 L516.91 290.21 L515.37 292.26 L513.73 294.23 L512.01 296.09 L510.21 297.83 L508.37 299.43 L506.50 300.86 L504.62 302.12 L502.75 303.18 L500.92 304.05 L499.14 304.70 L497.44 305.13 L495.82 305.34 L494.32 305.32 L492.94 305.08 L491.70 304.61 L490.62 303.93 L489.70 303.03 L488.96 301.93 L488.40 300.65 L488.03 299.19 L487.86 297.57 L487.89 295.81 L488.11 293.93 L488.52 291.95 L489.13 289.88 L489.92 287.77 L490.88 285.61 L492.00 283.45 L493.28 281.30 L494.69 279.19 L496.23 277.14 L497.87 275.17 L499.59 273.31 L501.39 271.57 L503.23 269.97 L505.10 268.54 L506.98 267.28 L508.85 266.22 L510.68 265.35 L512.46 264.70 L514.16 264.27 L515.78 264.06 L517.28 264.08 L518.66 264.32 L519.90 264.79 Z"/></clipPath>
<path d="M520.98 265.47 L521.90 266.37 L522.64 267.47 L523.20 268.75 L523.57 270.21 L523.74 271.83 L523.71 273.59 L523.49 275.47 L523.08 277.45 L522.47 279.52 L521.68 281.63 L520.72 283.79 L519.60 285.95 L518.32 288.10 L516.91 290.21 L515.37 292.26 L513.73 294.23 L512.01 296.09 L510.21 297.83 L508.37 299.43 L506.50 300.86 L504.62 302.12 L502.75 303.18 L500.92 304.05 L499.14 304.70 L497.44 305.13 L495.82 305.34 L494.32 305.32 L492.94 305.08 L491.70 304.61 L490.62 303.93 L489.70 303.03 L488.96 301.93 L488.40 300.65 L488.03 299.19 L487.86 297.57 L487.89 295.81 L488.11 293.93 L488.52 291.95 L489.13 289.88 L489.92 287.77 L490.88 285.61 L492.00 283.45 L493.28 281.30 L494.69 279.19 L496.23 277.14 L497.87 275.17 L499.59 273.31 L501.39 271.57 L503.23 269.97 L505.10 268.54 L506.98 267.28 L508.85 266.22 L510.68 265.35 L512.46 264.70 L514.16 264.27 L515.78 264.06 L517.28 264.08 L518.66 264.32 L519.90 264.79 Z M519.21 266.66 L518.30 266.11 L517.25 265.75 L516.07 265.60 L514.77 265.65 L513.37 265.91 L511.87 266.37 L510.31 267.03 L508.68 267.88 L507.02 268.91 L505.34 270.11 L503.66 271.47 L501.99 272.97 L500.36 274.59 L498.78 276.32 L497.27 278.14 L495.85 280.03 L494.53 281.96 L493.33 283.93 L492.26 285.90 L491.33 287.85 L490.55 289.76 L489.94 291.62 L489.49 293.39 L489.21 295.07 L489.11 296.63 L489.18 298.06 L489.43 299.33 L489.85 300.45 L490.44 301.38 L491.19 302.14 L492.10 302.69 L493.15 303.05 L494.33 303.20 L495.63 303.15 L497.03 302.89 L498.53 302.43 L500.09 301.77 L501.72 300.92 L503.38 299.89 L505.06 298.69 L506.74 297.33 L508.41 295.83 L510.04 294.21 L511.62 292.48 L513.13 290.66 L514.55 288.77 L515.87 286.84 L517.07 284.87 L518.14 282.90 L519.07 280.95 L519.85 279.04 L520.46 277.18 L520.91 275.41 L521.19 273.73 L521.29 272.17 L521.22 270.74 L520.97 269.47 L520.55 268.35 L519.96 267.42 Z" fill="url(#og)" fill-rule="evenodd"/>
<path d="M519.4 272.2 L481.40 291.45 L480.02 297.20 Z" fill="#fff"/>
<path d="M519.4 272.2 L480.40 303.07 L481.40 306.45 Z" fill="#fff"/>
<path d="M519.4 272.2 L485.40 311.70 L488.15 312.70 Z" fill="#fff"/>
<g clip-path="url(#oc)">
<path d="M519.4 272.2 L487.94 282.54 L485.96 289.14 Z" fill="url(#og)"/>
<path d="M519.4 272.2 L484.75 294.20 L485.08 299.37 Z" fill="url(#og)"/>
<path d="M519.4 272.2 L485.96 302.34 L489.48 306.96 Z" fill="url(#og)"/>
<path d="M519.4 272.2 L491.90 307.84 L499.60 304.32 Z" fill="url(#og)"/>
</g>
</svg>
<span class="t" style="left:48.65px;top:18px;font-size:12.5px;color:#ffffff;letter-spacing:-0.446px;-webkit-text-stroke:0.35px #fff;">AutoSave</span>
<span class="t" style="left:127.85px;top:18px;font-size:12.5px;color:#ffffff;letter-spacing:0.523px;-webkit-text-stroke:0.35px #fff;">Off</span>
<span class="t" style="left:200.25px;top:19px;font-size:12.5px;color:#ffffff;letter-spacing:-0.314px;-webkit-text-stroke:0.35px #fff;">ICFClientCoachingLogTemplate-4.xls</span>
<span class="t" style="left:403.05px;top:19px;font-size:12.5px;color:#ffffff;-webkit-text-stroke:0.35px #fff;">-</span>
<span class="t" style="left:412.05px;top:19px;font-size:12.5px;color:#ffffff;letter-spacing:-0.186px;-webkit-text-stroke:0.35px #fff;">Compat...</span>
<span class="t" style="left:468.84px;top:20px;font-size:11px;color:#ffffff;-webkit-text-stroke:0.35px #fff;">▪</span>
<span class="t" style="left:478.75px;top:19px;font-size:12.5px;color:#ffffff;letter-spacing:-0.200px;-webkit-text-stroke:0.35px #fff;">Last Modified: 2m ago</span>
<span class="t" style="left:22.52px;top:58px;font-size:13px;color:#262626;letter-spacing:-0.464px;">File</span>
<span class="t" style="left:67.52px;top:58px;font-size:13px;color:#262626;letter-spacing:1.024px;-webkit-text-stroke:0.3px #262626;">Home</span>
<span class="t" style="left:124.22px;top:58px;font-size:13px;color:#262626;letter-spacing:0.069px;">Insert</span>
<span class="t" style="left:177.22px;top:58px;font-size:13px;color:#262626;letter-spacing:0.072px;">Draw</span>
<span class="t" style="left:228.72px;top:58px;font-size:13px;color:#262626;letter-spacing:-0.016px;">Page Layout</span>
<span class="t" style="left:322.52px;top:58px;font-size:13px;color:#262626;letter-spacing:-0.133px;">Formulas</span>
<span class="t" style="left:396.22px;top:58px;font-size:13px;color:#262626;letter-spacing:0.130px;">Data</span>
<span class="t" style="left:444.22px;top:58px;font-size:13px;color:#262626;letter-spacing:-0.413px;">Review</span>
<span class="t" style="left:503.72px;top:58px;font-size:13px;color:#262626;letter-spacing:-0.031px;">View</span>
<span class="t" style="left:552.02px;top:58px;font-size:13px;color:#262626;letter-spacing:0.124px;">Developer</span>
<span class="t" style="left:631.22px;top:58px;font-size:13px;color:#262626;letter-spacing:0.370px;">Help</span>
<span class="t" style="left:680.22px;top:58px;font-size:13px;color:#262626;letter-spacing:-0.032px;">Power Pivot</span>
<span class="t" style="left:879.72px;top:58px;font-size:13px;color:#262626;letter-spacing:-0.071px;">Comments</span>
<span class="t" style="left:983.02px;top:58px;font-size:13px;color:#ffffff;letter-spacing:-0.286px;-webkit-text-stroke:0.35px #fff;">Share</span>
<span class="t" style="left:26.11px;top:164px;font-size:11.5px;color:#262626;letter-spacing:0.460px;">Undo</span>
<span class="t" style="left:84.81px;top:164px;font-size:11.5px;color:#262626;letter-spacing:0.206px;">Clipboard</span>
<span class="t" style="left:229.31px;top:164px;font-size:11.5px;color:#262626;letter-spacing:0.455px;">Font</span>
<span class="t" style="left:362.61px;top:164px;font-size:11.5px;color:#262626;letter-spacing:0.280px;">Alignment</span>
<span class="t" style="left:489.31px;top:164px;font-size:11.5px;color:#262626;letter-spacing:0.155px;">Number</span>
<span class="t" style="left:648.31px;top:164px;font-size:11.5px;color:#262626;letter-spacing:-0.330px;">Styles</span>
<span class="t" style="left:792.11px;top:164px;font-size:11.5px;color:#262626;">Cells</span>
<span class="t" style="left:883.61px;top:164px;font-size:11.5px;color:#262626;letter-spacing:0.318px;">Editing</span>
<span class="t" style="left:961.11px;top:164px;font-size:11.5px;color:#262626;letter-spacing:-0.178px;">Analysis</span>
<span class="t" style="left:83.55px;top:124px;font-size:12.5px;color:#262626;letter-spacing:-0.742px;">Paste</span>
<span class="t" style="left:179.25px;top:89px;font-size:12.5px;color:#262626;letter-spacing:-0.156px;">Calibri</span>
<span class="t" style="left:282.58px;top:89px;font-size:12px;color:#262626;">11</span>
<span class="t" style="left:476.45px;top:89px;font-size:12.5px;color:#262626;letter-spacing:-0.731px;">General</span>
<span class="t" style="left:603.95px;top:90px;font-size:12.5px;color:#262626;letter-spacing:-0.070px;">Conditional Formatting</span>
<span class="t" style="left:603.95px;top:116px;font-size:12.5px;color:#262626;letter-spacing:-0.472px;">Format as Table</span>
<span class="t" style="left:603.95px;top:142px;font-size:12.5px;color:#262626;letter-spacing:-0.555px;">Cell Styles</span>
<span class="t" style="left:787.65px;top:90px;font-size:12.5px;color:#262626;letter-spacing:-0.093px;">Insert</span>
<span class="t" style="left:787.65px;top:116px;font-size:12.5px;color:#262626;letter-spacing:-0.368px;">Delete</span>
<span class="t" style="left:787.65px;top:142px;font-size:12.5px;color:#262626;letter-spacing:-0.099px;">Format</span>
<span class="t" style="left:961.25px;top:123px;font-size:12.5px;color:#b4b4b4;letter-spacing:-0.414px;">Analyze</span>
<span class="t" style="left:970.05px;top:138px;font-size:12.5px;color:#b4b4b4;letter-spacing:-0.469px;">Data</span>
<span class="t" style="left:185.49px;top:114px;font-size:13.5px;color:#262626;font-weight:700;transform:scaleX(0.9);transform-origin:0 50%;">B</span>
<span class="t" style="left:211.37px;top:112px;font-size:15.5px;color:#262626;font-style:italic;font-family:'Liberation Serif',serif;">I</span>
<span class="t" style="left:236.02px;top:114px;font-size:13px;color:#262626;">U</span>
<span class="t" style="left:277.98px;top:111px;font-size:17px;color:#262626;transform:scaleX(0.92);transform-origin:0 50%;">A</span>
<span class="t" style="left:305.55px;top:115px;font-size:12.5px;color:#262626;">A</span>
<span class="t" style="left:269.56px;top:137px;font-size:14px;color:#262626;">A</span>
<span class="t" style="left:480.48px;top:112px;font-size:17px;color:#262626;font-weight:200;font-family:'DejaVu Sans',sans-serif;transform:scaleX(0.82);transform-origin:0 50%;">$</span>
<span class="t" style="left:516.92px;top:112px;font-size:18px;color:#262626;font-weight:200;font-family:'DejaVu Sans',sans-serif;">%</span>
<span class="t" style="left:15.58px;top:195px;font-size:12px;color:#262626;letter-spacing:1.596px;">D8</span>
<span class="t" style="left:238.58px;top:192px;font-size:17px;color:#262626;font-style:italic;font-family:'Liberation Serif',serif;-webkit-text-stroke:0.3px #262626;">fx</span>
<span class="t" style="left:86.98px;top:225px;font-size:12px;color:#262626;">A</span>
<span class="t" style="left:296.98px;top:225px;font-size:12px;color:#262626;">B</span>
<span class="t" style="left:499.48px;top:225px;font-size:12px;color:#262626;">C</span>
<span class="t" style="left:613.48px;top:225px;font-size:12px;color:#1e6b41;">D</span>
<span class="t" style="left:727.48px;top:225px;font-size:12px;color:#262626;">E</span>
<span class="t" style="left:833.48px;top:225px;font-size:12px;color:#262626;">F</span>
<span class="t" style="left:918.48px;top:225px;font-size:12px;color:#262626;">G</span>
<span class="t" style="left:1006.48px;top:225px;font-size:12px;color:#262626;">H</span>
<span class="t" style="left:10.28px;top:340px;font-size:12px;color:#262626;">1</span>
<span class="t" style="left:10.28px;top:398px;font-size:12px;color:#262626;">2</span>
<span class="t" style="left:10.28px;top:422px;font-size:12px;color:#262626;">3</span>
<span class="t" style="left:10.28px;top:444px;font-size:12px;color:#262626;">4</span>
<span class="t" style="left:10.28px;top:468px;font-size:12px;color:#262626;">5</span>
<span class="t" style="left:10.28px;top:490px;font-size:12px;color:#262626;">6</span>
<span class="t" style="left:10.28px;top:514px;font-size:12px;color:#262626;">7</span>
<span class="t" style="left:10.28px;top:536px;font-size:12px;color:#1e6b41;">8</span>
<span class="t" style="left:10.28px;top:560px;font-size:12px;color:#262626;">9</span>
<span class="t" style="left:6.63px;top:582px;font-size:12px;color:#262626;letter-spacing:1.781px;">10</span>
<span class="t" style="left:6.63px;top:606px;font-size:12px;color:#262626;letter-spacing:2.671px;">11</span>
<span class="t" style="left:6.63px;top:628px;font-size:12px;color:#262626;letter-spacing:1.781px;">12</span>
<span class="t" style="left:6.63px;top:652px;font-size:12px;color:#262626;letter-spacing:1.781px;">13</span>
<div class="a" style="left:0;top:0;width:1087px;height:683px;overflow:hidden"><span class="t" style="left:6.63px;top:674px;font-size:12px;color:#262626;letter-spacing:1.781px;">14</span></div>
<span class="t" style="left:440.88px;top:333px;font-size:18.67px;color:#000;letter-spacing:0.226px;">ICF Client Coaching Log</span>
<span class="t" style="left:50.62px;top:378px;font-size:14.67px;color:#000;letter-spacing:0.062px;">Client Name</span>
<span class="t" style="left:236.42px;top:378px;font-size:14.67px;color:#000;letter-spacing:0.025px;">Contact Information</span>
<span class="t" style="left:451.02px;top:378px;font-size:14.67px;color:#000;letter-spacing:-0.138px;">Individual/Group</span>
<span class="t" style="left:583.92px;top:368px;font-size:14.67px;color:#000;letter-spacing:-0.006px;">Number in</span>
<span class="t" style="left:597.62px;top:387px;font-size:14.67px;color:#000;letter-spacing:0.007px;">Group</span>
<span class="t" style="left:697.72px;top:378px;font-size:14.67px;color:#000;letter-spacing:0.131px;">Start Date</span>
<span class="t" style="left:807.02px;top:378px;font-size:14.67px;color:#000;letter-spacing:0.036px;">End Date</span>
<span class="t" style="left:907.62px;top:368px;font-size:14.67px;color:#000;letter-spacing:0.172px;">Paid</span>
<span class="t" style="left:903.42px;top:387px;font-size:14.67px;color:#000;letter-spacing:0.272px;">hours</span>
<span class="t" style="left:979.52px;top:368px;font-size:14.67px;color:#000;letter-spacing:0.052px;">Pro-bono</span>
<span class="t" style="left:991.72px;top:387px;font-size:14.67px;color:#000;letter-spacing:0.272px;">hours</span>
<span class="t" style="left:521.30px;top:257px;font-size:50.5px;color:#2a3593;letter-spacing:-1.680px;font-weight:700;font-style:italic;-webkit-text-stroke:2px #2a3593;">ICF</span>
<span class="t" style="left:486.94px;top:307px;font-size:7.6px;color:#3a45a0;letter-spacing:0.325px;">International Coach Federation</span>
<span class="t" style="left:124.46px;top:688px;font-size:14px;color:#262626;letter-spacing:0.193px;-webkit-text-stroke:0.25px #262626;">Client Log</span>
<span class="t" style="left:213.52px;top:692px;font-size:13px;color:#262626;letter-spacing:0.289px;">Sheet 2</span>
<span class="t" style="left:285.52px;top:692px;font-size:13px;color:#262626;letter-spacing:0.311px;">Sheet3</span>
<span class="t" style="left:7.62px;top:721px;font-size:11.3px;color:#262626;letter-spacing:-0.075px;">Ready</span>
<span class="t" style="left:107.62px;top:721px;font-size:11.3px;color:#262626;letter-spacing:0.020px;">Accessibility: Unavailable</span>
<span class="t" style="left:673.82px;top:721px;font-size:11.3px;color:#262626;letter-spacing:0.077px;">Display Settings</span>
<span class="t" style="left:1039.67px;top:720px;font-size:10.5px;color:#262626;letter-spacing:0.300px;">100%</span>
<span class="t" style="left:422.80px;top:86px;font-size:10px;color:#444;letter-spacing:1.075px;">ab</span>
<span class="t" style="left:422.60px;top:93px;font-size:10px;color:#444;">c</span>
<span class="t" style="left:549.04px;top:88px;font-size:36px;color:#3b3b3b;font-weight:700;font-family:'Liberation Serif',serif;">,</span>
<span class="t" style="left:484.49px;top:138px;font-size:8.5px;color:#444;letter-spacing:0.926px;">.0</span>
<span class="t" style="left:479.29px;top:147px;font-size:8.5px;color:#444;letter-spacing:0.696px;">.00</span>
<span class="t" style="left:505.29px;top:138px;font-size:8.5px;color:#444;letter-spacing:0.796px;">.00</span>
<span class="t" style="left:510.49px;top:147px;font-size:8.5px;color:#444;letter-spacing:1.126px;">.0</span>
<span class="t" style="left:907.20px;top:85px;font-size:10px;color:#1e8bcd;font-weight:700;">A</span>
<span class="t" style="left:907.37px;top:94px;font-size:10.5px;color:#3b3b3b;">Z</span>
<span class="t" style="left:98.96px;top:725px;font-size:9px;color:#3b3b3b;font-weight:700;">?</span>
</div>
</body></html>
